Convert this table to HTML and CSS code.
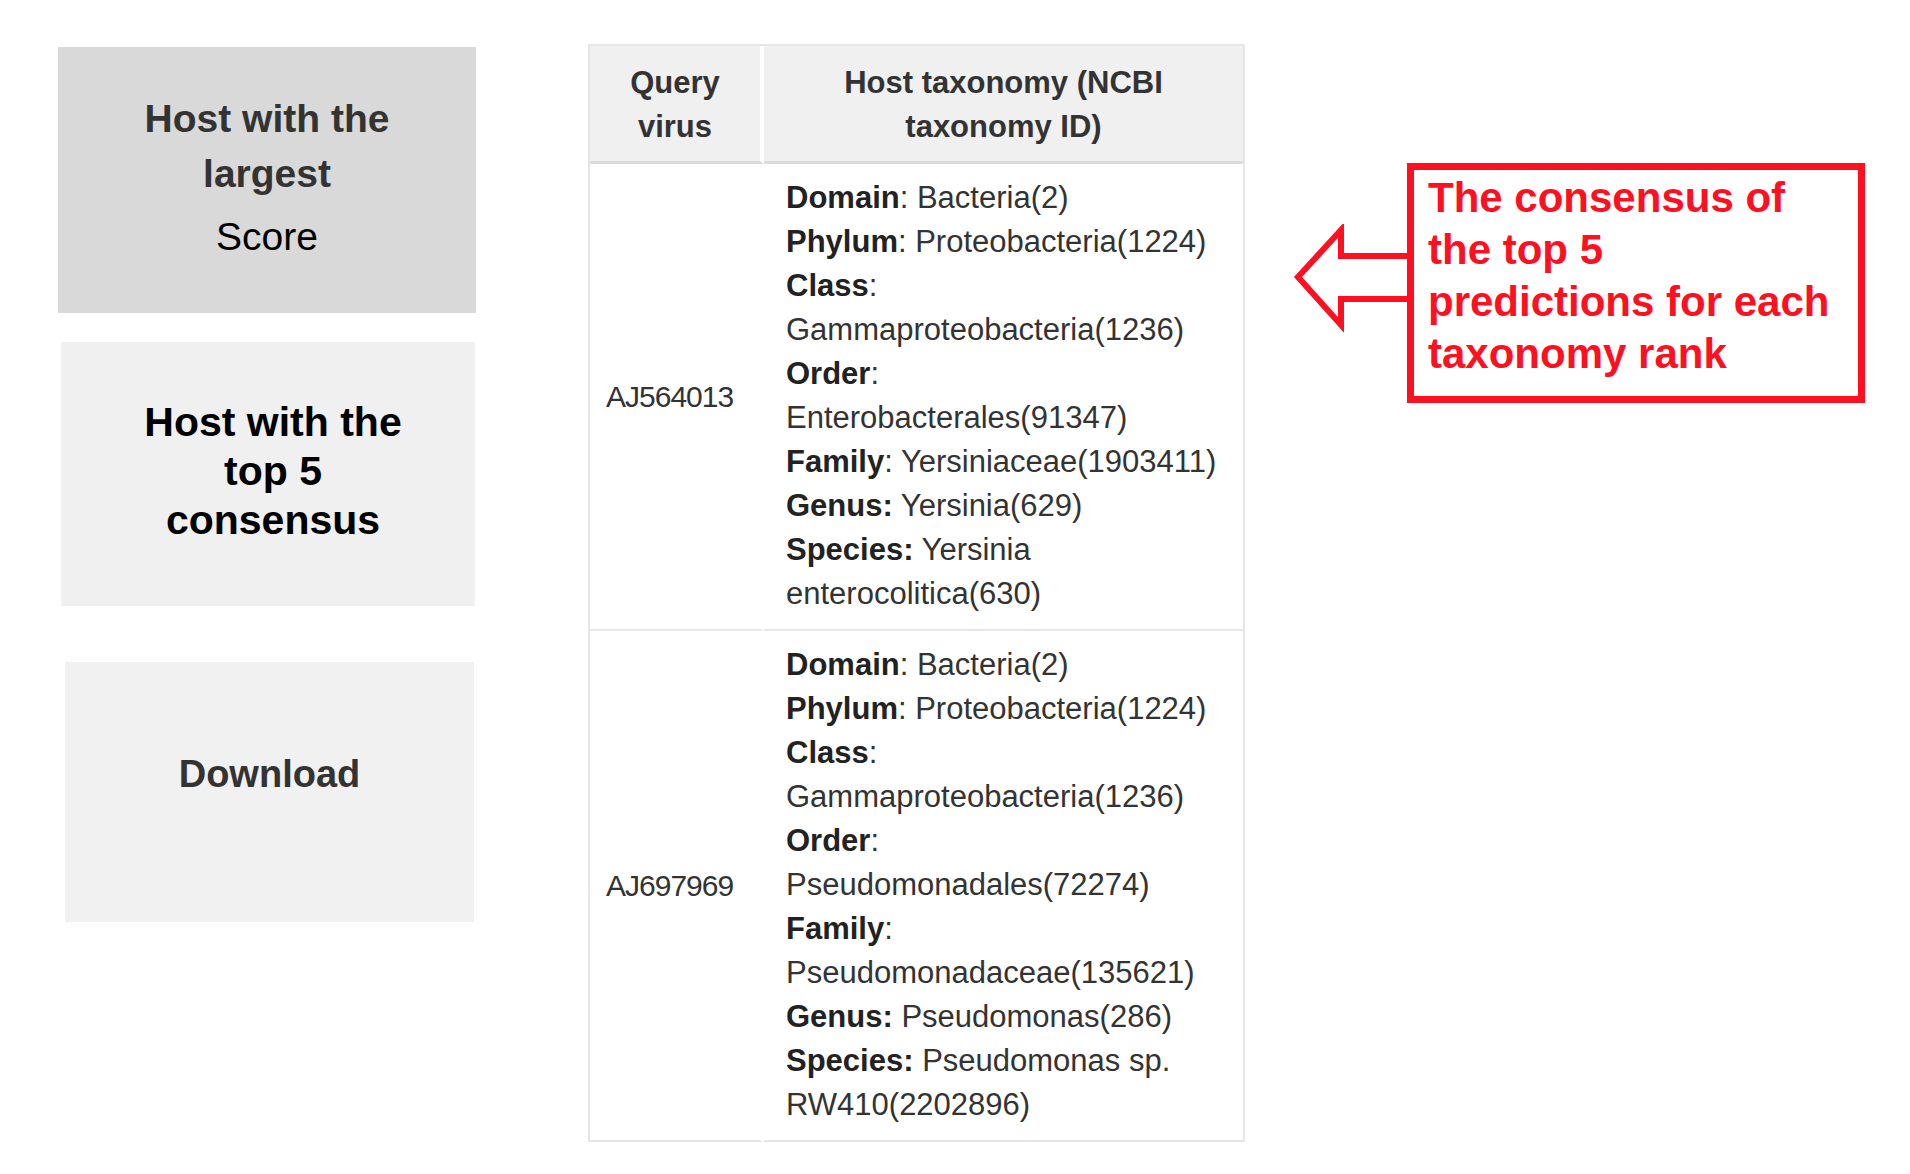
FILE: index.html
```html
<!DOCTYPE html>
<html lang="en">

<head>
  <meta charset="UTF-8">
  <meta name="viewport" content="width=device-width, initial-scale=1.0">
  <title>Host prediction result</title>
  <link rel="stylesheet" href="styles.css">
</head>

<body>
  <div class="page">
    <nav class="modes">
      <a href="#" class="mode mode-score">
        <span class="mode-title">Host with the largest</span>
        <span class="mode-sub">Score</span>
      </a>
      <a href="#" class="mode mode-top5">
        <span class="mode-title">Host with the top 5 consensus</span>
      </a>
      <a href="#" class="mode mode-download">Download</a>
    </nav>

    <table class="result">
      <colgroup>
        <col class="col-query">
        <col class="col-taxa">
      </colgroup>
      <thead>
        <tr>
          <th>Query virus</th>
          <th>Host taxonomy (NCBI taxonomy ID)</th>
        </tr>
      </thead>
      <tbody>
        <tr>
          <td class="query">AJ564013</td>
          <td class="taxa">
            <b>Domain</b>: Bacteria(2)<br>
            <b>Phylum</b>: Proteobacteria(1224)<br>
            <b>Class</b>: Gammaproteobacteria(1236)<br>
            <b>Order</b>: Enterobacterales(91347)<br>
            <b>Family</b>: Yersiniaceae(1903411)<br>
            <b>Genus:</b> Yersinia(629)<br>
            <b>Species:</b> Yersinia enterocolitica(630)
          </td>
        </tr>
        <tr>
          <td class="query">AJ697969</td>
          <td class="taxa">
            <b>Domain</b>: Bacteria(2)<br>
            <b>Phylum</b>: Proteobacteria(1224)<br>
            <b>Class</b>: Gammaproteobacteria(1236)<br>
            <b>Order</b>: Pseudomonadales(72274)<br>
            <b>Family</b>: Pseudomonadaceae(135621)<br>
            <b>Genus:</b> Pseudomonas(286)<br>
            <b>Species:</b> Pseudomonas sp. RW410(2202896)
          </td>
        </tr>
      </tbody>
    </table>

    <div class="note">
      <svg class="note-arrow" width="116" height="110" viewBox="0 0 116 110">
        <path d="M116 32 L50 32 L50 6 L7 53 L50 101 L50 75 L116 75" fill="none" stroke="#fe1020" stroke-width="6" stroke-linejoin="miter"/>
      </svg>
      <div class="note-box">The consensus of the top 5 predictions for each taxonomy rank</div>
    </div>
  </div>
</body>

</html>
```

FILE: styles.css
```css
    html,
    body {
      margin: 0;
      background: #fff;
      font-family: 'Liberation Sans', Arial, Helvetica, sans-serif;
    }

    .page {
      display: flex;
      align-items: flex-start;
      padding: 43px 0 0 58px;
    }

    /* mode buttons on the left */
    .modes {
      display: flex;
      flex-direction: column;
      align-items: flex-start;
      margin-top: 4px;
      flex: none;
    }

    .mode {
      display: flex;
      flex-direction: column;
      align-items: center;
      justify-content: center;
      text-align: center;
      text-decoration: none;
      box-sizing: border-box;
    }

    .mode-score {
      width: 418px;
      height: 266px;
      background: #d9d9d9;
      padding-bottom: 5px;
    }

    .mode-score .mode-title {
      max-width: 260px;
      font-size: 39px;
      line-height: 55px;
      font-weight: bold;
      color: #333;
    }

    .mode-score .mode-sub {
      margin-top: 8px;
      font-size: 39px;
      line-height: 55px;
      color: #000;
    }

    .mode-top5 {
      width: 414px;
      height: 264px;
      margin: 29px 0 0 3px;
      padding: 0 0 5px 10px;
      background: #f0f0f0;
    }

    .mode-top5 .mode-title {
      max-width: 270px;
      font-size: 41px;
      line-height: 49px;
      font-weight: bold;
      color: #000;
    }

    .mode-download {
      width: 409px;
      height: 260px;
      margin: 56px 0 0 7px;
      padding-bottom: 36px;
      background: #f1f1f1;
      font-size: 38px;
      font-weight: bold;
      color: #333;
    }

    /* result table */
    .result {
      flex: none;
      margin: 1px 0 0 112px;
      width: 657px;
      table-layout: fixed;
      border-collapse: separate;
      border-spacing: 0;
      border: 2px solid #e6e6e6;
      border-bottom: none;
      font-size: 31px;
      line-height: 44px;
      color: #333;
    }

    .col-query {
      width: 174px;
    }

    .col-taxa {
      width: 479px;
    }

    .result th {
      background: #f0f0f0;
      font-weight: bold;
      text-align: center;
      padding: 15px 12px 12px;
      border-bottom: 3px solid #dcdcdc;
    }

    .result td {
      padding: 12px 17px 13px 22px;
      border-bottom: 2px solid #e6e6e6;
      vertical-align: middle;
      text-align: left;
    }

    .result th:first-child,
    .result td:first-child {
      border-right: 4px solid #fff;
    }

    .result td.query {
      padding: 12px 8px 12px 16px;
      font-size: 30px;
      letter-spacing: -1px;
    }

    .result b {
      color: #222;
    }

    /* red annotation */
    .note {
      display: flex;
      align-items: flex-start;
      margin: 120px 0 0 46px;
      flex: none;
    }

    .note-arrow {
      flex: none;
      margin-top: 61px;
    }

    .note-box {
      width: 458px;
      height: 240px;
      box-sizing: border-box;
      border: 7px solid #fe1020;
      padding: 2px 23px 0 14px;
      color: #fe1020;
      font-size: 42px;
      line-height: 52px;
      font-weight: bold;
    }
```
